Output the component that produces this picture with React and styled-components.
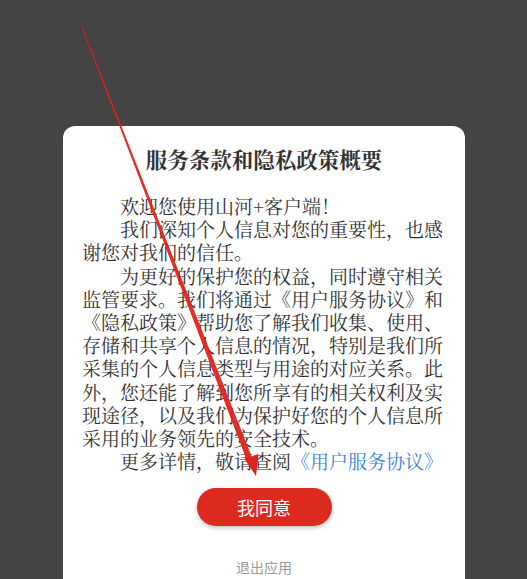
import React from "react";
import styled, { createGlobalStyle } from "styled-components";

const GlobalStyle = createGlobalStyle`
  html, body {
    margin: 0;
    padding: 0;
    background: #444444;
    height: 579px;
    overflow: hidden;
  }
`;

const Screen = styled.div`
  position: relative;
  width: 527px;
  height: 579px;
  overflow: hidden;
  background: #444444;
`;

const Card = styled.section`
  margin: 126px 0 0 63px;
  width: 402px;
  height: 470px;
  box-sizing: border-box;
  padding: 17px 19px 0 19px;
  background: #ffffff;
  border-radius: 12px 12px 0 0;
  display: flex;
  flex-direction: column;
  align-items: center;
`;

const Title = styled.h2`
  margin: 0 0 19px;
  font-family: "Noto Serif CJK SC", "Liberation Serif", "Noto Sans CJK SC", serif;
  font-size: 21.5px;
  line-height: 32px;
  font-weight: bold;
  color: #333333;
`;

const Body = styled.div`
  width: 100%;
  font-family: "Noto Serif CJK SC", "Liberation Serif", "Noto Sans CJK SC", serif;
  font-size: 19px;
  line-height: 23.2px;
  color: #333333;
`;

const Para = styled.p`
  margin: 0;
  text-indent: 2em;
  text-align: left;
`;

const Link = styled.a`
  color: #3b82e0;
  text-decoration: none;
`;

const AgreeButton = styled.button`
  margin-top: 16px;
  width: 135px;
  height: 38px;
  flex-shrink: 0;
  border: none;
  border-radius: 19px;
  background: #dd2a1e;
  color: #ffffff;
  font-family: "Noto Sans CJK SC", "Noto Sans", sans-serif;
  font-size: 18px;
  box-shadow: 0 2px 4px rgba(0, 0, 0, 0.25);
  cursor: pointer;
`;

const ExitLink = styled.div`
  margin-top: 31px;
  font-family: "Noto Sans CJK SC", "Noto Sans", sans-serif;
  font-size: 14px;
  line-height: 20px;
  color: #999999;
`;

const Annotation = styled.svg`
  position: absolute;
  left: 0;
  top: 0;
  pointer-events: none;
`;

export default function App() {
  return (
    <Screen>
      <GlobalStyle />
      <Card>
        <Title>服务条款和隐私政策概要</Title>
        <Body>
          <Para>欢迎您使用山河+客户端！</Para>
          <Para>我们深知个人信息对您的重要性，也感谢您对我们的信任。</Para>
          <Para>
            为更好的保护您的权益，同时遵守相关监管要求。我们将通过《用户服务协议》和《隐私政策》帮助您了解我们收集、使用、存储和共享个人信息的情况，特别是我们所采集的个人信息类型与用途的对应关系。此外，您还能了解到您所享有的相关权利及实现途径，以及我们为保护好您的个人信息所采用的业务领先的安全技术。
          </Para>
          <Para>
            更多详情，敬请查阅<Link href="#">《用户服务协议》</Link>
          </Para>
        </Body>
        <AgreeButton>我同意</AgreeButton>
        <ExitLink>退出应用</ExitLink>
      </Card>
      <Annotation width="527" height="579" viewBox="0 0 527 579">
        <polygon points="81.6,27 82.4,27 253.8,462 248.2,464" fill="#e0231b" opacity="0.95" />
        <polygon points="244.5,459 258.5,454 256,476" fill="#e0231b" />
      </Annotation>
    </Screen>
  );
}
